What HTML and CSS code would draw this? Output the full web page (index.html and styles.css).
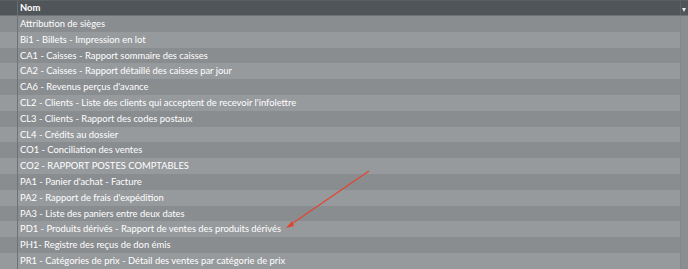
FILE: index.html
```html
<!DOCTYPE html>
<html lang="fr">
<head>
<meta charset="utf-8">
<link rel="stylesheet" href="styles.css">
</head>
<body>
<div class="grid">
  <div class="row head">
    <div class="sel"></div>
    <div class="name">Nom</div>
    <div class="edge"><span class="tri"></span></div>
  </div>
  <div class="row odd"><div class="sel"></div><div class="name">Attribution de sièges</div><div class="edge"></div></div>
  <div class="row even"><div class="sel"></div><div class="name">Bi1 - Billets - Impression en lot</div><div class="edge"></div></div>
  <div class="row odd"><div class="sel"></div><div class="name">CA1 - Caisses - Rapport sommaire des caisses</div><div class="edge"></div></div>
  <div class="row even"><div class="sel"></div><div class="name">CA2 - Caisses - Rapport détaillé des caisses par jour</div><div class="edge"></div></div>
  <div class="row odd"><div class="sel"></div><div class="name">CA6 - Revenus perçus d'avance</div><div class="edge"></div></div>
  <div class="row even"><div class="sel"></div><div class="name">CL2 - Clients - Liste des clients qui acceptent de recevoir l'infolettre</div><div class="edge"></div></div>
  <div class="row odd"><div class="sel"></div><div class="name">CL3 - Clients - Rapport des codes postaux</div><div class="edge"></div></div>
  <div class="row even"><div class="sel"></div><div class="name">CL4 - Crédits au dossier</div><div class="edge"></div></div>
  <div class="row odd"><div class="sel"></div><div class="name">CO1 - Conciliation des ventes</div><div class="edge"></div></div>
  <div class="row even"><div class="sel"></div><div class="name">CO2 - RAPPORT POSTES COMPTABLES</div><div class="edge"></div></div>
  <div class="row odd"><div class="sel"></div><div class="name">PA1 - Panier d'achat - Facture</div><div class="edge"></div></div>
  <div class="row even"><div class="sel"></div><div class="name">PA2 - Rapport de frais d'expédition</div><div class="edge"></div></div>
  <div class="row odd"><div class="sel"></div><div class="name">PA3 - Liste des paniers entre deux dates</div><div class="edge"></div></div>
  <div class="row even"><div class="sel"></div><div class="name">PD1 - Produits dérivés - Rapport de ventes des produits dérivés</div><div class="edge"></div></div>
  <div class="row odd"><div class="sel"></div><div class="name">PH1- Registre des reçus de don émis</div><div class="edge"></div></div>
  <div class="row even"><div class="sel"></div><div class="name">PR1 - Catégories de prix - Détail des ventes par catégorie de prix</div><div class="edge"></div></div>
  <svg class="arrow" width="688" height="269" viewBox="0 0 688 269">
    <line x1="369" y1="171" x2="290" y2="225" stroke="#e2452f" stroke-width="1.2"/>
    <polygon points="286,228 292,221 294,226" fill="#e2452f"/>
  </svg>
</div>
</body>
</html>
```
FILE: styles.css
```css
html, body {
  margin: 0;
  padding: 0;
  background: #8b8e91;
}
.grid {
  position: relative;
  width: 688px;
  height: 269px;
  overflow: hidden;
  font-family: Lato, "Open Sans", sans-serif;
  font-size: 9.4px;
  color: #ffffff;
}
.row {
  display: flex;
  height: 15.8px;
  line-height: 15.8px;
}
.row.head {
  height: 16px;
  line-height: 16px;
  background: #50555a;
  border-top: 1px solid #5a5f63;
  box-sizing: border-box;
  border-bottom: 1px solid #6e7276;
  font-weight: 700;
}
.row.head .name {
  line-height: 14px;
}
.sel {
  width: 17px;
  flex: none;
  border-right: 1px solid #6f7275;
}
.head .sel { border-right-color: #6a6e72; }
.name {
  flex: 1;
  padding-left: 2px;
  white-space: nowrap;
  overflow: hidden;
}
.edge {
  width: 7px;
  flex: none;
  border-left: 1px solid #85888b;
  position: relative;
  background: #8b8e91;
}
.head .edge {
  background: #50555a;
  border-left-color: #5e6266;
}
.odd { background: #8a8d90; }
.even { background: #979a9d; }
.tri {
  position: absolute;
  left: 1px;
  top: 7px;
  width: 0;
  height: 0;
  border-left: 2.5px solid transparent;
  border-right: 2.5px solid transparent;
  border-top: 4px solid #e8e8e8;
}
.arrow {
  position: absolute;
  left: 0;
  top: 0;
  pointer-events: none;
}
```
